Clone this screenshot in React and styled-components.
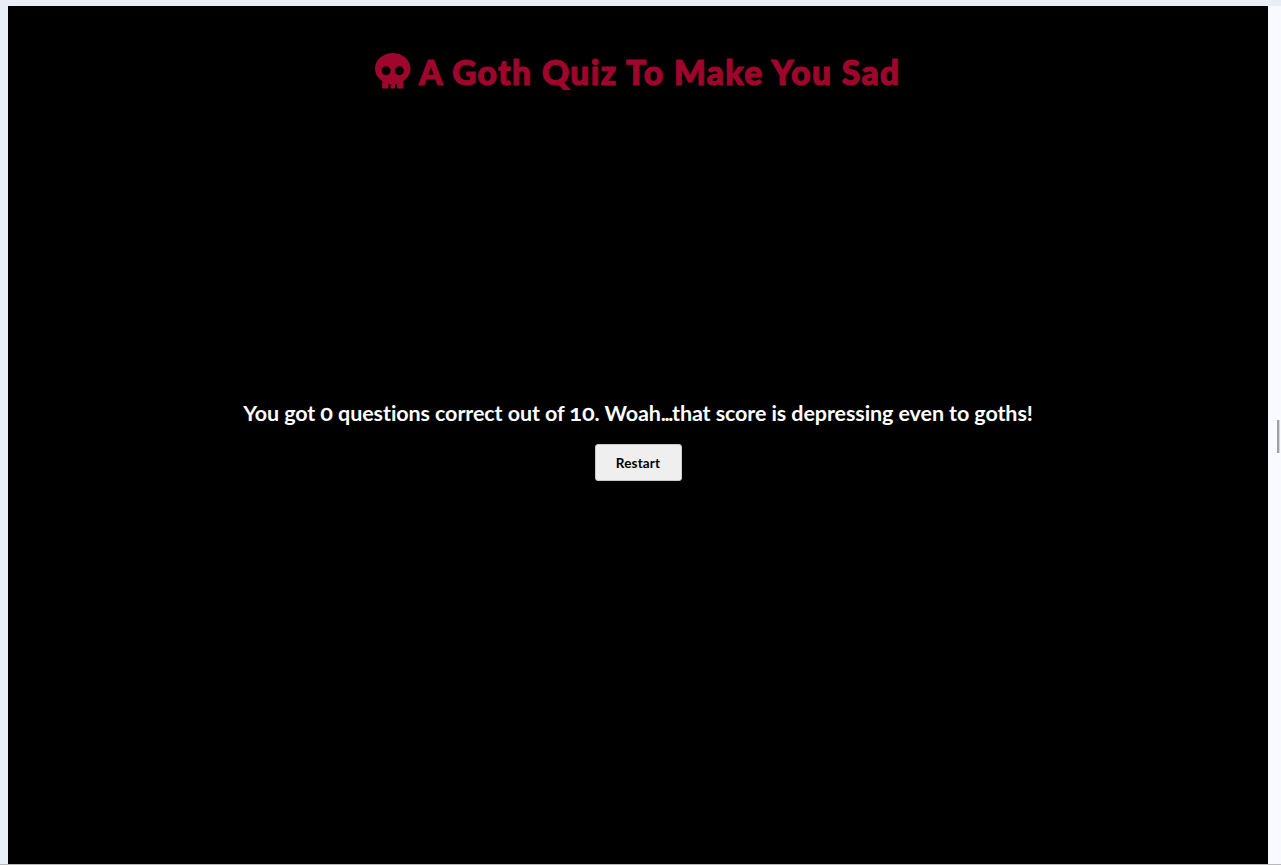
import React from "react";
import styled, { createGlobalStyle } from "styled-components";
import { FaSkull } from "react-icons/fa";

const GlobalStyle = createGlobalStyle`
  * { box-sizing: border-box; }
  body { margin: 0; overflow: hidden; font-family: Lato, "Open Sans", sans-serif; }
`;

const Window = styled.div`
  display: grid;
  grid-template-columns: 8px 1260px 13px;
  grid-template-rows: 6px 858px 1px;
  width: 1281px;
  height: 865px;
  background: #e9eef6;
`;

const TopEdge = styled.div`
  grid-column: 1 / -1;
`;

const LeftEdge = styled.div`
  background: #e9eff9;
`;

const BottomEdge = styled.div`
  grid-column: 1 / -1;
  background: #b9b9b9;
`;

const Page = styled.main`
  display: flex;
  flex-direction: column;
  align-items: center;
  background: #000;
`;

const Title = styled.h1`
  display: flex;
  align-items: center;
  gap: 8px;
  height: 36px;
  margin: 47px 0 0;
  color: #9e062b;
  font-size: 33.5px;
  font-weight: 900;
  line-height: 36px;
  letter-spacing: 1.42px;
  white-space: nowrap;
`;

const TitleText = styled.span`
  padding-top: 1px;
  -webkit-text-stroke: 1.2px currentColor;
`;

const Skull = styled(FaSkull)`
  width: 35.5px;
  height: 35.5px;
`;

const Result = styled.section`
  display: flex;
  flex-direction: column;
  align-items: center;
  margin-top: 309px;
`;

const Score = styled.p`
  margin: 0;
  color: #fff;
  font-size: 21.5px;
  font-weight: 700;
  line-height: 30px;
  letter-spacing: -0.09px;
  font-variant-numeric: oldstyle-nums;
  font-variant-ligatures: none;
  white-space: nowrap;
`;

const Digits = styled.span`
  font-size: 23.5px;
  line-height: 1;
`;

const Ellipsis = styled.span`
  letter-spacing: -1.4px;
`;

const RestartButton = styled.button`
  width: 87px;
  height: 37px;
  margin: 16px 0 0;
  padding: 0;
  border: 1px solid #c9c9c9;
  border-radius: 3px;
  background: #efefef;
  color: #000;
  font: 700 13.5px/20px Lato, "Open Sans", sans-serif;
  letter-spacing: 0.15px;
`;

const ScrollTrack = styled.div`
  display: flex;
  align-items: flex-start;
  justify-content: flex-end;
  padding: 414px 1px 0 0;
  background: #f8faff;
`;

const ScrollThumb = styled.div`
  width: 3px;
  height: 33px;
  background: linear-gradient(90deg, #a0a0a0 2px, #d8d8da 2px);
`;

export default function App() {
  return (
    <Window>
      <GlobalStyle />
      <TopEdge />
      <LeftEdge />
      <Page>
        <Title>
          <Skull aria-hidden="true" />
          <TitleText>A Goth Quiz To Make You Sad</TitleText>
        </Title>
        <Result>
          <Score>
            You got <Digits>0</Digits> questions correct out of <Digits>10</Digits>. Woah
            <Ellipsis>...</Ellipsis>that score is depressing even to goths!
          </Score>
          <RestartButton type="button">Restart</RestartButton>
        </Result>
      </Page>
      <ScrollTrack>
        <ScrollThumb />
      </ScrollTrack>
      <BottomEdge />
    </Window>
  );
}
